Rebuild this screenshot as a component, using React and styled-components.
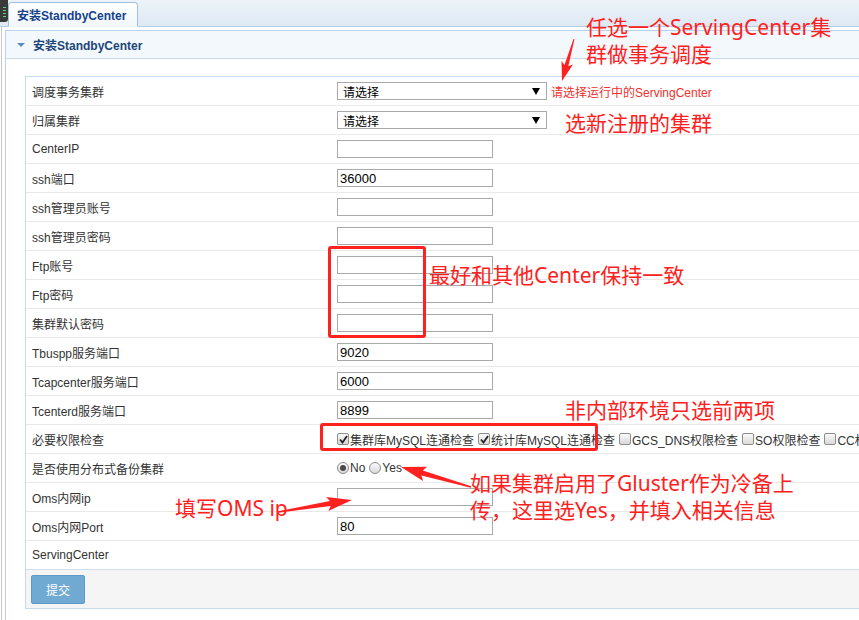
import React from 'react';
import styled, { createGlobalStyle } from 'styled-components';

const GlobalStyle = createGlobalStyle`
  html, body {
    margin: 0;
    padding: 0;
    background: #ffffff;
    overflow: hidden;
  }
  body {
    font-family: "Liberation Sans", "Noto Sans CJK SC", sans-serif;
    font-size: 12px;
    color: #333;
  }
`;

const Page = styled.div`
  position: relative;
  width: 859px;
  height: 620px;
  overflow: hidden;
`;

const TabStrip = styled.div`
  display: flex;
  align-items: flex-end;
  height: 26px;
  background: linear-gradient(#ecf3f9, #dfe9f4);
  border-bottom: 1px solid #b3cbe3;
`;

const AppIcon = styled.div`
  align-self: flex-start;
  width: 8px;
  height: 22px;
  border-radius: 0 0 3px 0;
  background:
    repeating-linear-gradient(to bottom, #3a3a3a 0 2px, #5fd07a 2px 3px) 3px 5px / 3px 14px no-repeat,
    #3a3a3a;
`;

const Tab = styled.div`
  display: flex;
  align-items: center;
  height: 25px;
  margin-bottom: -1px;
  padding: 0 8px;
  box-sizing: border-box;
  width: 130px;
  background: linear-gradient(#ffffff, #f1f6fb);
  border: 1px solid #a3bfdb;
  border-bottom-color: #f1f6fb;
  border-radius: 4px 4px 0 0;
  color: #15428b;
  font-weight: bold;
  font-size: 12px;
`;

const Body = styled.div`
  margin-left: 1px;
  border-left: 1px solid #c9c9c9;
  padding: 3px 0 0 3px;
  height: 600px;
`;

const Panel = styled.div`
  width: 1000px;
  border: 1px solid #b9d1ea;
  background: #fff;
`;

const PanelHeader = styled.div`
  display: flex;
  align-items: center;
  height: 27px;
  padding-left: 11px;
  background: #f3f8fd;
  border-bottom: 1px solid #c6d9ed;
  color: #1d4677;
  font-weight: bold;
`;

const Caret = styled.span`
  width: 0;
  height: 0;
  border-left: 4px solid transparent;
  border-right: 4px solid transparent;
  border-top: 4px solid #5b8cc1;
  margin-right: 8px;
`;

const PanelBody = styled.div`
  padding: 17px 0 24px 19px;
`;

const Table = styled.div`
  border-top: 1px solid #c5d9ef;
  border-left: 1px solid #c5d9ef;
  border-bottom: 1px solid #c5d9ef;
`;

const Row = styled.div`
  display: grid;
  grid-template-columns: 305px 1fr;
  align-items: center;
  height: 29px;
  box-sizing: border-box;
  border-bottom: 1px solid ${p => (p.last ? '#cfdff0' : '#e9e9e9')};
`;

const Label = styled.div`
  padding-left: 6px;
  color: #333;
  white-space: nowrap;
`;

const Cell = styled.div`
  display: flex;
  align-items: center;
  padding-left: 6px;
  white-space: nowrap;
`;

const TextInput = styled.input`
  width: 156px;
  height: 18px;
  box-sizing: border-box;
  border: 1px solid #a9a9a9;
  border-radius: 0;
  padding: 0 2px;
  font-family: "Liberation Sans", "Noto Sans CJK SC", sans-serif;
  font-size: 13px;
  color: #000;
  outline: none;
`;

const SelectBox = styled.div`
  display: flex;
  align-items: center;
  justify-content: space-between;
  width: 210px;
  height: 18px;
  box-sizing: border-box;
  border: 1px solid #a9a9a9;
  padding: 0 6px 0 5px;
  color: #000;
  background: #fff;
`;

const SelectArrow = styled.span`
  width: 0;
  height: 0;
  border-left: 4px solid transparent;
  border-right: 4px solid transparent;
  border-top: 7px solid #000;
`;

const Hint = styled.span`
  margin-left: 4px;
  color: #f0302c;
`;

const Choice = styled.label`
  display: flex;
  align-items: center;
  margin-right: 4px;
  color: #333;
`;

const Box = styled.span`
  display: inline-flex;
  align-items: center;
  justify-content: center;
  width: 12px;
  height: 12px;
  box-sizing: border-box;
  margin-right: 1px;
  border: 1px solid #8c8c8c;
  border-radius: ${p => (p.round ? '50%' : '2px')};
  background: linear-gradient(#fafafa, #d9d9d9);
`;

const Dot = styled.span`
  width: 6px;
  height: 6px;
  border-radius: 50%;
  background: #4a4a4a;
`;

const Footer = styled.div`
  height: 38px;
  padding: 5px 0 0 5px;
  box-sizing: border-box;
  background: #f5f5f5;
`;

const SubmitButton = styled.button`
  width: 54px;
  height: 29px;
  border: 1px solid #5f99c7;
  border-radius: 2px;
  background: #70a9d2;
  color: #fff;
  font-family: "Liberation Sans", "Noto Sans CJK SC", sans-serif;
  font-size: 12px;
`;

const Note = styled.div`
  position: absolute;
  left: ${p => p.x}px;
  top: ${p => p.y}px;
  color: #ff2020;
  font-family: "Noto Sans", "Noto Sans CJK SC", sans-serif;
  font-size: 21px;
  line-height: 27px;
  white-space: nowrap;
`;

const Frame = styled.div`
  position: absolute;
  left: ${p => p.x}px;
  top: ${p => p.y}px;
  width: ${p => p.w}px;
  height: ${p => p.h}px;
  box-sizing: border-box;
  border: 3px solid #ff2020;
  border-radius: 3px;
`;

const Overlay = styled.svg`
  position: absolute;
  left: 0;
  top: 0;
  pointer-events: none;
`;

const Check = () => (
  <svg width="9" height="9" viewBox="0 0 9 9">
    <path d="M1 4.5 L3.5 7.5 L8 1" fill="none" stroke="#222" strokeWidth="1.8" />
  </svg>
);

const CheckItem = ({ checked, children }) => (
  <Choice>
    <Box>{checked && <Check />}</Box>
    {children}
  </Choice>
);

const RadioItem = ({ checked, children }) => (
  <Choice>
    <Box round>{checked && <Dot />}</Box>
    {children}
  </Choice>
);

const arrowPoints = (x1, y1, x2, y2, head, headW, tail, neck) => {
  const dx = x2 - x1;
  const dy = y2 - y1;
  const len = Math.hypot(dx, dy);
  const ux = dx / len;
  const uy = dy / len;
  const nx = -uy;
  const ny = ux;
  const bx = x2 - ux * head;
  const by = y2 - uy * head;
  const p = (x, y, w) => `${(x + nx * w).toFixed(1)},${(y + ny * w).toFixed(1)}`;
  return [
    p(x1, y1, tail / 2),
    p(bx, by, neck / 2),
    p(bx - ux * 3, by - uy * 3, headW / 2),
    `${x2},${y2}`,
    p(bx - ux * 3, by - uy * 3, -headW / 2),
    p(bx, by, -neck / 2),
    p(x1, y1, -tail / 2),
  ].join(' ');
};

const inputRows = [
  ['CenterIP', ''],
  ['ssh端口', '36000'],
  ['ssh管理员账号', ''],
  ['ssh管理员密码', ''],
  ['Ftp账号', ''],
  ['Ftp密码', ''],
  ['集群默认密码', ''],
  ['Tbuspp服务端口', '9020'],
  ['Tcapcenter服务端口', '6000'],
  ['Tcenterd服务端口', '8899'],
];

const checks = [
  ['集群库MySQL连通检查', true],
  ['统计库MySQL连通检查', true],
  ['GCS_DNS权限检查', false],
  ['SO权限检查', false],
  ['CC权限检查', false],
];

export default function App() {
  return (
    <Page>
      <GlobalStyle />
      <TabStrip>
        <AppIcon />
        <Tab>安装StandbyCenter</Tab>
      </TabStrip>
      <Body>
        <Panel>
          <PanelHeader>
            <Caret />
            安装StandbyCenter
          </PanelHeader>
          <PanelBody>
            <Table>
              <Row>
                <Label>调度事务集群</Label>
                <Cell>
                  <SelectBox>请选择<SelectArrow /></SelectBox>
                  <Hint>请选择运行中的ServingCenter</Hint>
                </Cell>
              </Row>
              <Row>
                <Label>归属集群</Label>
                <Cell>
                  <SelectBox>请选择<SelectArrow /></SelectBox>
                </Cell>
              </Row>
              {inputRows.map(([label, value]) => (
                <Row key={label}>
                  <Label>{label}</Label>
                  <Cell>
                    <TextInput defaultValue={value} />
                  </Cell>
                </Row>
              ))}
              <Row>
                <Label>必要权限检查</Label>
                <Cell>
                  {checks.map(([text, on]) => (
                    <CheckItem key={text} checked={on}>{text}</CheckItem>
                  ))}
                </Cell>
              </Row>
              <Row>
                <Label>是否使用分布式备份集群</Label>
                <Cell>
                  <RadioItem checked>No</RadioItem>
                  <RadioItem>Yes</RadioItem>
                </Cell>
              </Row>
              <Row>
                <Label>Oms内网ip</Label>
                <Cell><TextInput defaultValue="" /></Cell>
              </Row>
              <Row>
                <Label>Oms内网Port</Label>
                <Cell><TextInput defaultValue="80" /></Cell>
              </Row>
              <Row last>
                <Label>ServingCenter</Label>
                <Cell />
              </Row>
              <Footer>
                <SubmitButton>提交</SubmitButton>
              </Footer>
            </Table>
          </PanelBody>
        </Panel>
      </Body>

      <Frame x={328} y={246} w={98} h={92} />
      <Frame x={320} y={423} w={278} h={28} />

      <Overlay width="859" height="620">
        <polygon points={arrowPoints(574, 39, 562, 81, 16, 12, 1, 4)} fill="#ff2020" />
        <polygon points={arrowPoints(471, 487, 401, 467, 22, 15, 1.5, 5)} fill="#ff2020" />
        <polygon points={arrowPoints(278, 512, 352, 500, 22, 14, 1.5, 5)} fill="#ff2020" />
      </Overlay>

      <Note x={586} y={14}>任选一个ServingCenter集<br />群做事务调度</Note>
      <Note x={565} y={110}>选新注册的集群</Note>
      <Note x={429} y={262}>最好和其他Center保持一致</Note>
      <Note x={565} y={397}>非内部环境只选前两项</Note>
      <Note x={470} y={470}>如果集群启用了Gluster作为冷备上<br />传，这里选Yes，并填入相关信息</Note>
      <Note x={175} y={495}>填写OMS ip</Note>
    </Page>
  );
}
